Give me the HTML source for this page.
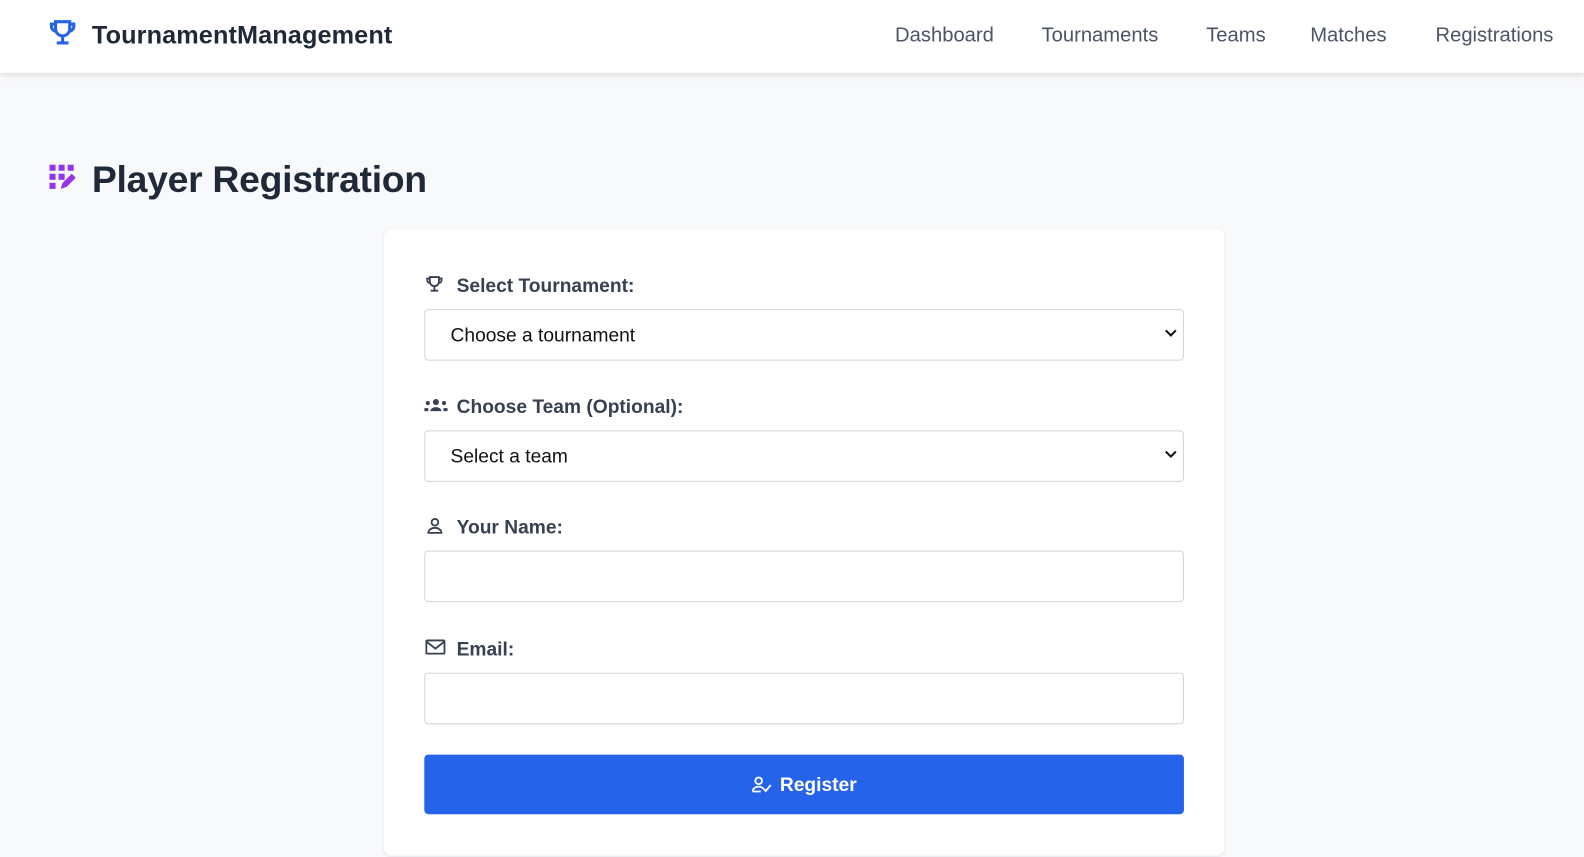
<!DOCTYPE html>
<html><head><style>
*{box-sizing:border-box;margin:0;padding:0}
body{width:1584px;height:856px;background:#f8f9fb;font-family:"Liberation Sans",sans-serif;overflow:hidden;position:relative}
#w{position:absolute;left:0;top:0;width:1568px;height:848px;transform:scale(1.0102);transform-origin:0 0}
.nav{position:absolute;top:0;left:0;width:1570px;height:72px;background:#fff;box-shadow:0 2px 6px rgba(0,0,0,.12)}
.logo{position:absolute;left:91px;top:21px;font-size:25px;font-weight:bold;color:#1f2937;letter-spacing:0.1px}
.links a{position:absolute;top:24px;font-size:20px;color:#4b5563;text-decoration:none}
h1{position:absolute;left:91px;top:157px;font-size:37px;font-weight:bold;color:#1f2937;letter-spacing:-0.3px}
.card{position:absolute;left:380px;top:227px;width:832px;height:620px;background:#fff;border-radius:8px;box-shadow:0 1px 3px rgba(0,0,0,.08)}
.lab{position:absolute;left:452px;font-size:19px;font-weight:bold;color:#374151}
.inp{position:absolute;left:420px;width:752px;height:51px;border:1px solid #d1d5db;border-radius:4px;background:#fff;font-size:19px;color:#111;padding:15px 0 0 25px}
.inp svg{position:absolute;right:6px;top:19px}
.ic{position:absolute;left:420px}
.btn{position:absolute;left:420px;top:747px;width:752px;height:59px;background:#2563eb;border-radius:4px;color:#fff;font-size:19px;font-weight:bold;text-align:center;padding-top:20px}
</style></head><body><div id="w">
<div class="nav">
<svg style="position:absolute;left:48px;top:18px" width="28" height="28" viewBox="0 0 24 24" fill="none" stroke="#2563eb" stroke-width="2.6"><path d="M6 3h12v6a6 6 0 0 1-12 0z M6 5H2.5v2a4 4 0 0 0 4 4 M18 5h3.5v2a4 4 0 0 1-4 4 M12 15v5 M7 21h10"/></svg>
<div class="logo">TournamentManagement</div>
<div class="links"><a style="left:886px">Dashboard</a><a style="left:1031px">Tournaments</a><a style="left:1194px">Teams</a><a style="left:1297px">Matches</a><a style="left:1421px">Registrations</a></div>
</div>
<svg style="position:absolute;left:49px;top:163px" width="28" height="26" viewBox="0 0 28 26" fill="#9333ea"><rect x="0" y="0" width="6" height="6"/><rect x="9" y="0" width="6" height="6"/><rect x="18" y="0" width="6" height="6"/><rect x="0" y="9" width="6" height="6"/><rect x="9" y="9" width="6" height="6"/><rect x="0" y="18" width="6" height="6"/><path d="M11 24l2-6 9-9 4 4-9 9z"/></svg>
<h1>Player Registration</h1>
<div class="card"></div>
<svg class="ic" style="top:272px" width="20" height="18" viewBox="0 0 24 24" fill="none" stroke="#374151" stroke-width="2.4"><path d="M6 3h12v6a6 6 0 0 1-12 0z M6 5H2.5v2a4 4 0 0 0 4 4 M18 5h3.5v2a4 4 0 0 1-4 4 M12 15v5 M7 21h10"/></svg>
<div class="lab" style="top:273px">Select Tournament:</div>
<div class="inp" style="top:306px">Choose a tournament<svg width="12" height="8" viewBox="0 0 12 8"><path d="M1 1l5 5 5-5" stroke="#111" stroke-width="2" fill="none"/></svg></div>
<svg class="ic" style="top:394px" width="23" height="14" viewBox="0 0 23 14" fill="#374151"><circle cx="11.5" cy="4" r="3"/><path d="M6 13a5.5 4 0 0 1 11 0z"/><circle cx="3.5" cy="5" r="2"/><circle cx="19.5" cy="5" r="2"/><rect x="0" y="10" width="4" height="3"/><rect x="19" y="10" width="4" height="3"/></svg>
<div class="lab" style="top:393px">Choose Team (Optional):</div>
<div class="inp" style="top:426px">Select a team<svg width="12" height="8" viewBox="0 0 12 8"><path d="M1 1l5 5 5-5" stroke="#111" stroke-width="2" fill="none"/></svg></div>
<svg class="ic" style="top:512px;left:422px" width="17" height="17" viewBox="0 0 17 17" fill="none" stroke="#374151" stroke-width="1.8"><circle cx="8.5" cy="5" r="3.3"/><path d="M2 15.5a6.5 5 0 0 1 13 0z"/></svg>
<div class="lab" style="top:512px">Your Name:</div>
<div class="inp" style="top:545px"></div>
<svg class="ic" style="top:633px;left:421px" width="20" height="15" viewBox="0 0 20 15" fill="none" stroke="#374151" stroke-width="1.8"><rect x="1" y="1" width="18" height="13" rx="1"/><path d="M1 2l9 7 9-7"/></svg>
<div class="lab" style="top:633px">Email:</div>
<div class="inp" style="top:666px"></div>
<div class="btn"><svg style="vertical-align:-2px;margin-right:8px" width="20" height="17" viewBox="0 0 20 17" fill="none" stroke="#fff" stroke-width="1.8"><circle cx="7" cy="5" r="3.3"/><path d="M1 15.5a6 5 0 0 1 10-3.5M1 15.5h8M11 12l3 3 5-6"/></svg>Register</div>
</div></body></html>
